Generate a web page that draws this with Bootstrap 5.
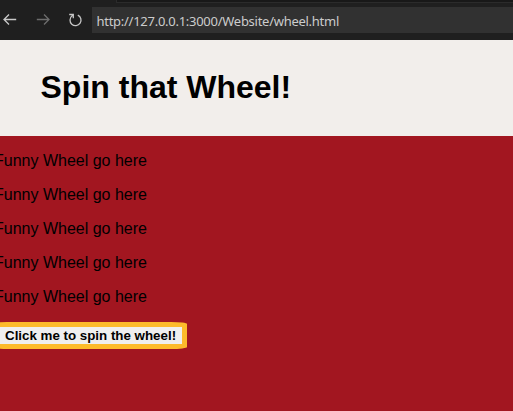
<!DOCTYPE html>
<html lang="en">
<head>
<meta charset="utf-8">
<meta name="viewport" content="width=device-width, initial-scale=1">
<title>Spin that Wheel!</title>
<link href="https://cdn.jsdelivr.net/npm/bootstrap@5.3.0/dist/css/bootstrap.min.css" rel="stylesheet">
<style>
body { background: #a21620; color: #000; font-family: "Liberation Sans", Arial, sans-serif; height: 411px; }
.toolbar { height: 40px; background: #1f1f1f; }
.tab-strip { height: 3px; background: #1f1f1f; }
.tab-rest { margin-left: 116px; background: #181818; border-left: 1px solid #2b2b2b; border-bottom: 1px solid #2b2b2b; }
.tools { height: 37px; padding: 4px 0 7px 2px; }
.tool-icon { width: 16px; height: 16px; fill: none; stroke: #c8c8c8; stroke-width: 1.3; }
.tool-icon.dim { stroke: #6d6d6d; }
.tool-gap { gap: 17px; width: 90px; }
.address { background: #313131; color: #ccc; font: 13px/26px "Noto Sans", sans-serif; letter-spacing: -.27px; padding-left: 4.5px; padding-top: 1px; }
.banner { height: 96px; background: #f2eeeb; padding: 27px 0 0 40.5px; }
.banner h1 { font-size: 32px; line-height: 40px; font-weight: 700; }
.wheel-area { margin-left: -6px; padding-top: 16px; }
.wheel-area p { font-size: 16px; line-height: 18px; margin-bottom: 16px; }
.spin-frame { width: 196px; height: 27px; margin: 0 0 0 -3px; padding: 5px; background: #fdbb2b; border-radius: 16px / 2px; }
.spin-btn { width: 186px; height: 17px; background: #efefef; color: #000; font-size: 13.333px; line-height: 17px; font-weight: 700; padding: 0 0 0 9px; }
</style>
</head>
<body class="overflow-hidden">
<header class="toolbar">
  <div class="tab-strip d-flex"><div class="tab-rest flex-grow-1"></div></div>
  <div class="tools d-flex">
    <nav class="tool-gap d-flex align-items-center flex-shrink-0">
      <svg class="tool-icon" viewBox="0 0 16 16"><path d="M14.2 7.5H2M7 2.5l-5 5 5 5"/></svg>
      <svg class="tool-icon dim" viewBox="0 0 16 16"><path d="M1.8 7.5H14M9 2.5l5 5-5 5"/></svg>
      <svg class="tool-icon" viewBox="0 0 16 16"><path d="M1.2 2.5H5.3V6.3M9.8 3.1A5.5 5.5 0 1 1 4.1 3.8L5.3 2.8"/></svg>
    </nav>
    <div class="address flex-grow-1"><span>http://127.0.0.1:3000/Website/wheel.html</span></div>
  </div>
</header>
<div class="banner"><h1 class="m-0">Spin that Wheel!</h1></div>
<main class="wheel-area">
  <p>Funny Wheel go here</p>
  <p>Funny Wheel go here</p>
  <p>Funny Wheel go here</p>
  <p>Funny Wheel go here</p>
  <p>Funny Wheel go here</p>
  <div class="spin-frame d-flex"><button class="spin-btn border-0 text-start text-nowrap">Click me to spin the wheel!</button></div>
</main>
<script src="https://cdn.jsdelivr.net/npm/bootstrap@5.3.0/dist/js/bootstrap.bundle.min.js"></script>
</body>
</html>
